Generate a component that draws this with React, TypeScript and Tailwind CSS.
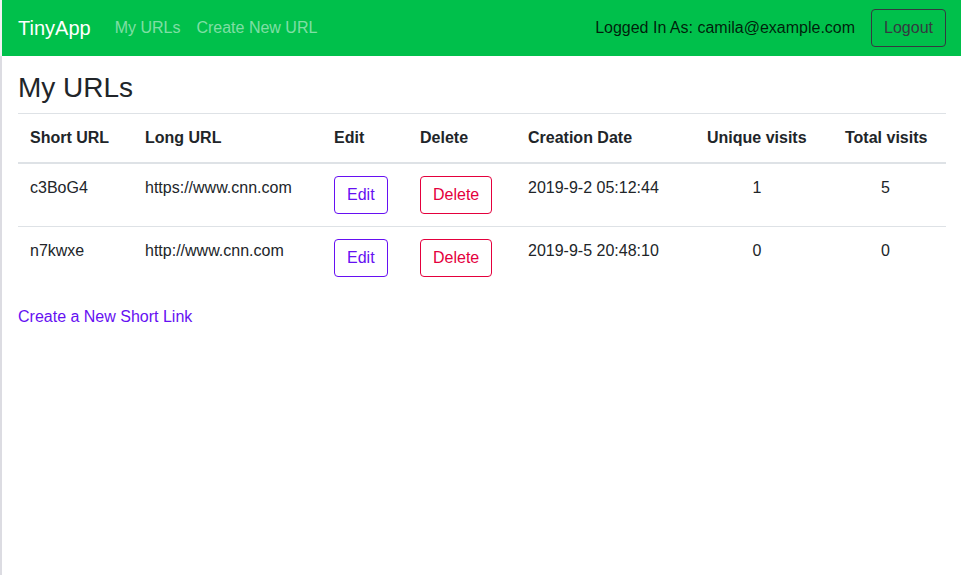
import React from "react";

const rows = [
  { short: "c3BoG4", long: "https://www.cnn.com", date: "2019-9-2 05:12:44", unique: "1", total: "5" },
  { short: "n7kwxe", long: "http://www.cnn.com", date: "2019-9-5 20:48:10", unique: "0", total: "0" },
];

export default function App() {
  return (
    <div
      className="flex min-h-[575px] w-full bg-white text-[#212529]"
      style={{ fontFamily: '"Liberation Sans", Arial, sans-serif' }}
    >
      <div className="flex w-[2px] shrink-0 flex-col">
        <div className="h-[56px] bg-[#f2f2f4]"></div>
        <div className="flex-1 bg-[#dcdce2]"></div>
      </div>
      <div className="flex min-w-0 flex-1 flex-col">
        <nav className="flex h-[56px] items-center bg-[#00c04b] pl-4 pr-[15px]">
          <span className="mr-[24px] text-[20px] leading-[30px] text-white">TinyApp</span>
          <span className="mr-4 text-[16px] leading-6 text-[rgba(255,255,255,0.5)]">My URLs</span>
          <span className="text-[16px] leading-6 text-[rgba(255,255,255,0.5)]">Create New URL</span>
          <div className="ml-auto flex items-center">
            <span className="mr-4 text-[16px] leading-6 text-[rgba(0,0,0,0.85)]">
              Logged In As: camila@example.com
            </span>
            <button className="h-[38px] rounded-[4px] border border-[#343a40] px-3 text-[16px] leading-6 text-[#343a40]">
              Logout
            </button>
          </div>
        </nav>
        <main className="pl-4 pr-[15px]">
          <h3 className="mb-2 mt-[15px] text-[28px] font-normal leading-[34px]">My URLs</h3>
          <table className="mb-4 w-full table-fixed border-collapse text-left text-[16px] leading-6">
            <thead>
              <tr className="border-t border-[#dee2e6]">
                <th className="w-[115px] border-b-2 border-[#dee2e6] p-3 font-bold">Short URL</th>
                <th className="w-[189px] border-b-2 border-[#dee2e6] p-3 font-bold">Long URL</th>
                <th className="w-[86px] border-b-2 border-[#dee2e6] p-3 font-bold">Edit</th>
                <th className="w-[108px] border-b-2 border-[#dee2e6] p-3 font-bold">Delete</th>
                <th className="w-[179px] border-b-2 border-[#dee2e6] p-3 font-bold">Creation Date</th>
                <th className="w-[138px] border-b-2 border-[#dee2e6] p-3 font-bold">Unique visits</th>
                <th className="border-b-2 border-[#dee2e6] p-3 font-bold">Total visits</th>
              </tr>
            </thead>
            <tbody>
              {rows.map((r, i) => (
                <tr key={r.short} className={i > 0 ? "border-t border-[#dee2e6]" : ""}>
                  <td className="p-3 align-top">{r.short}</td>
                  <td className="p-3 align-top">{r.long}</td>
                  <td className="p-3 align-top">
                    <button className="h-[38px] rounded-[4px] border border-[#6610f2] px-3 text-[#6610f2]">
                      Edit
                    </button>
                  </td>
                  <td className="p-3 align-top">
                    <button className="h-[38px] rounded-[4px] border border-[#e4003d] px-3 text-[#e4003d]">
                      Delete
                    </button>
                  </td>
                  <td className="whitespace-nowrap p-3 align-top">{r.date}</td>
                  <td className="py-3 pl-3 pr-[26px] text-center align-top">{r.unique}</td>
                  <td className="py-3 pl-3 pr-[20px] text-center align-top">{r.total}</td>
                </tr>
              ))}
            </tbody>
          </table>
          <a className="text-[16px] leading-6 text-[#6610f2]">Create a New Short Link</a>
        </main>
      </div>
    </div>
  );
}
